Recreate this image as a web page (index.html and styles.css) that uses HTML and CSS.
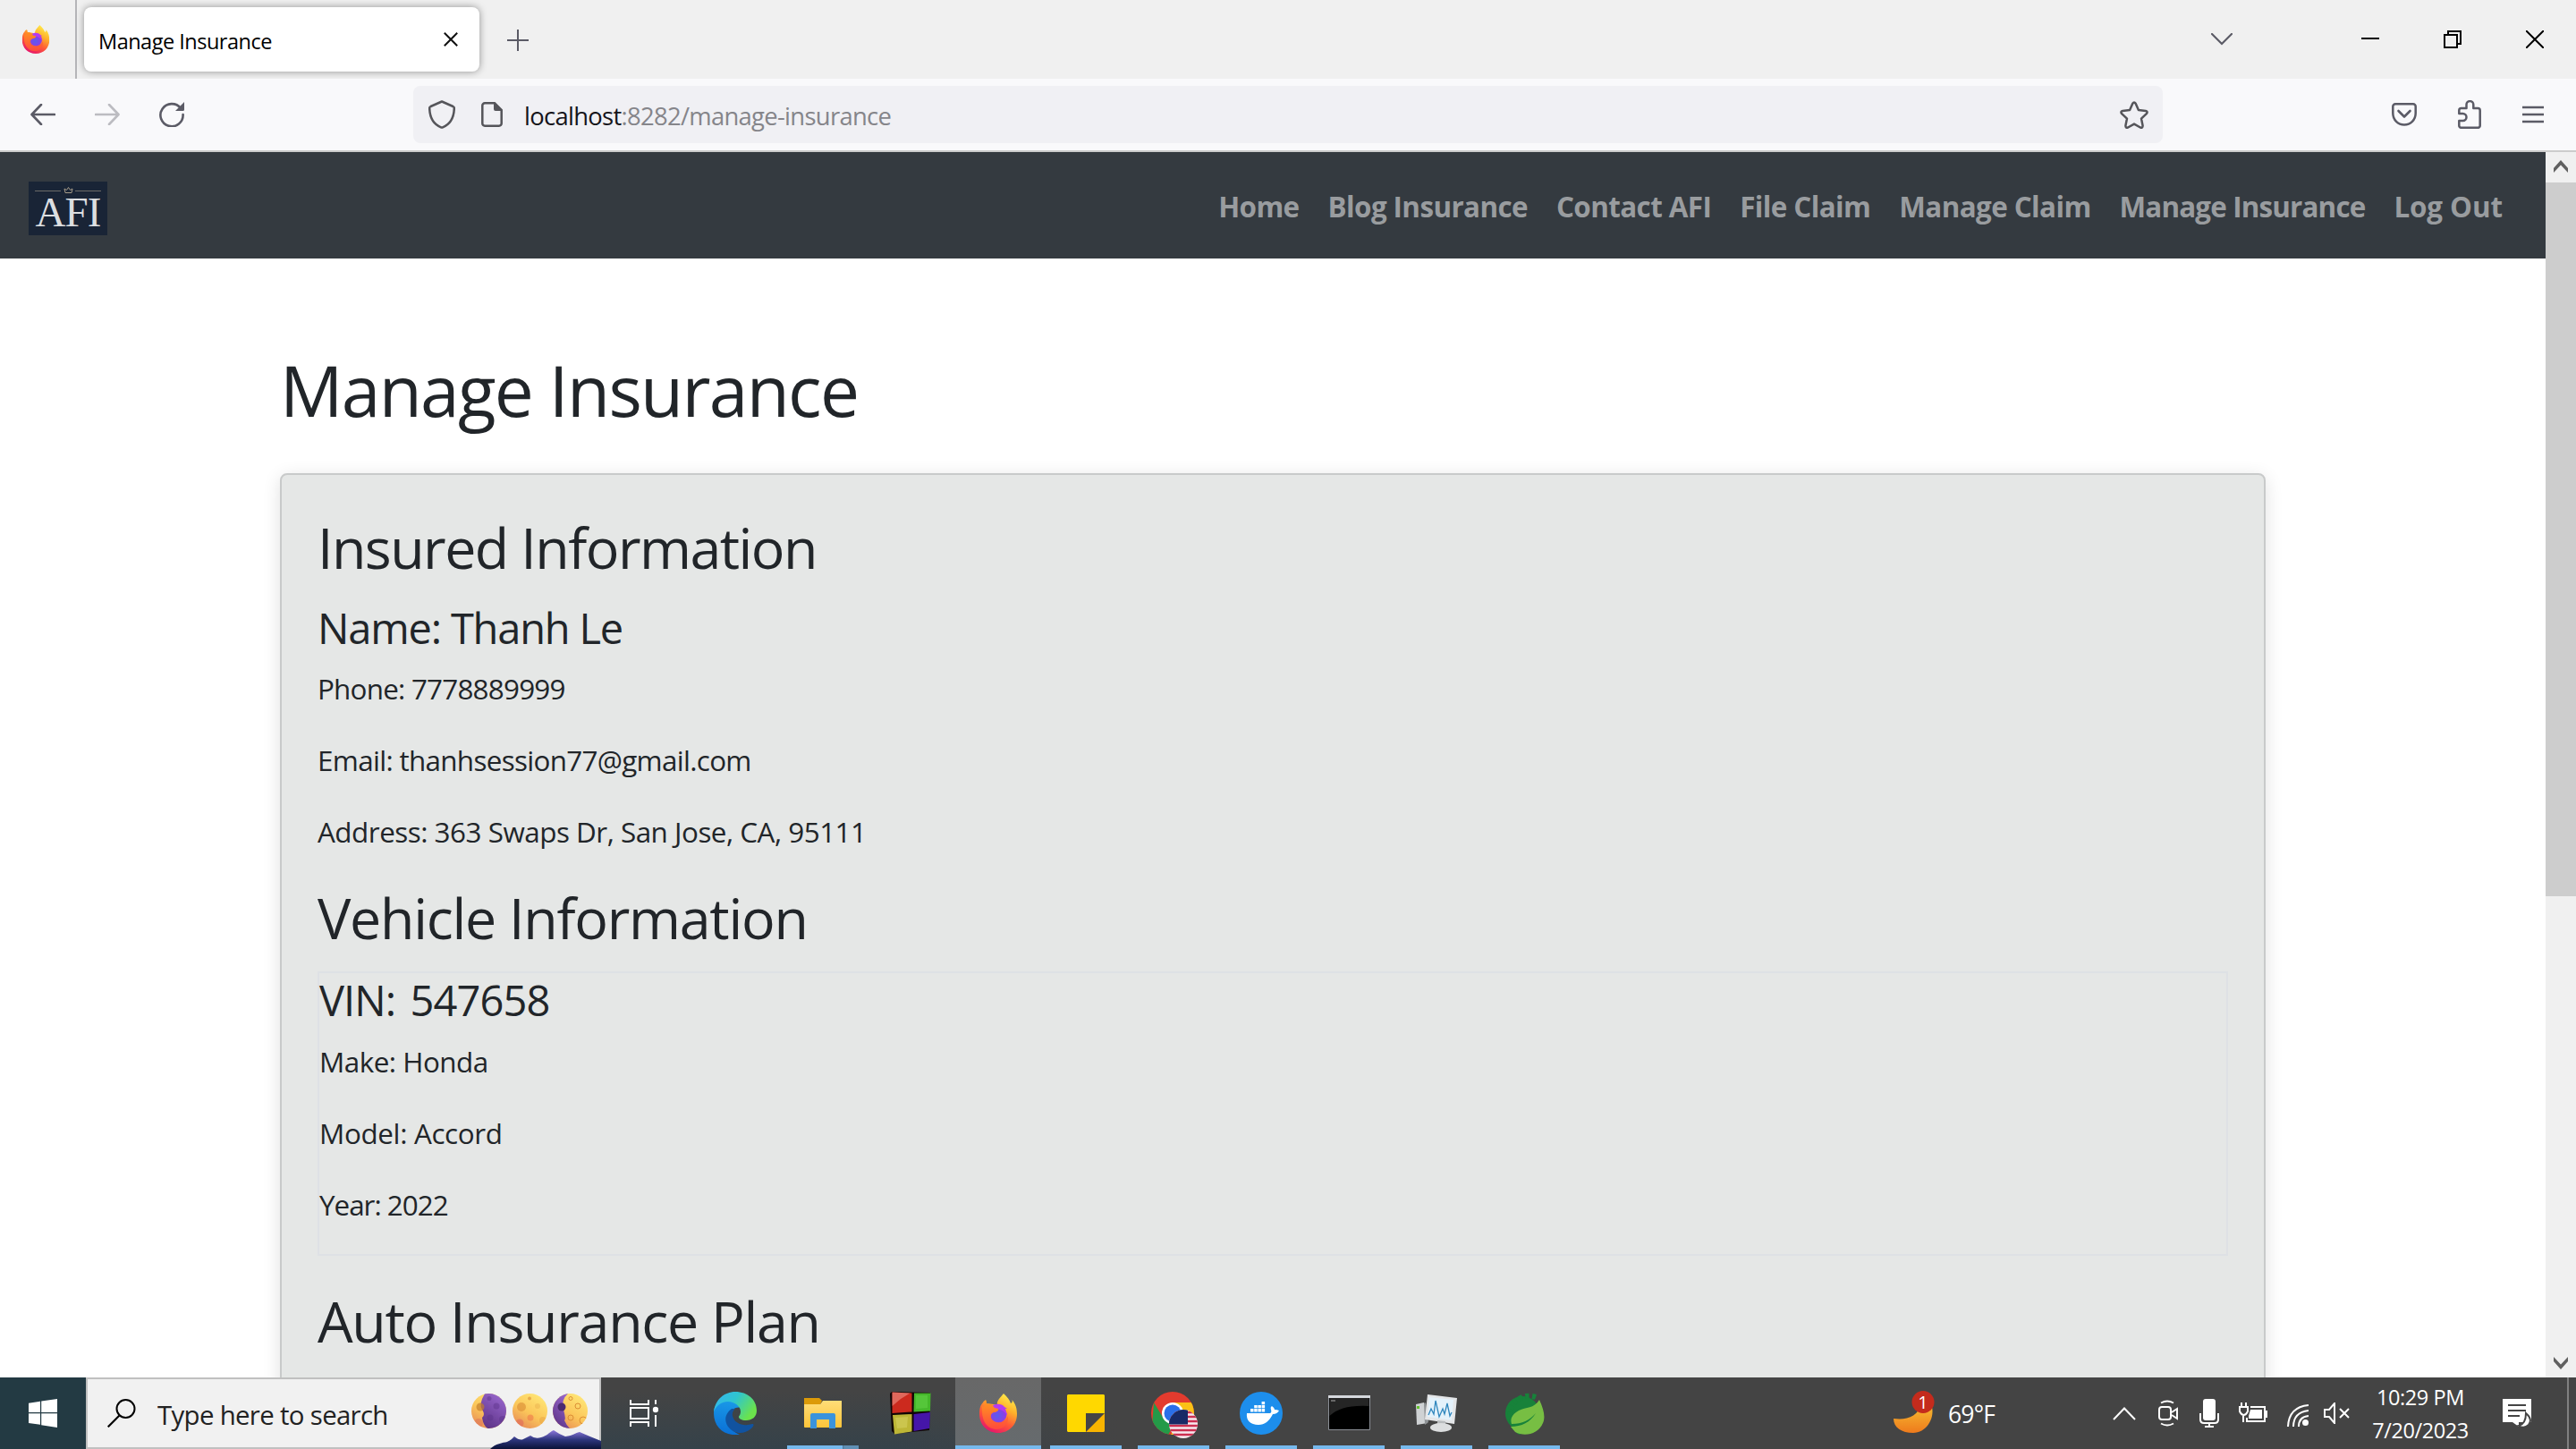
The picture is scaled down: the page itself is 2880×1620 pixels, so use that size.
FILE: index.html
```html
<!DOCTYPE html>
<html lang="en">
<head>
<meta charset="utf-8">
<title>Manage Insurance</title>
<link rel="stylesheet" href="styles.css">
</head>
<body>
<svg class="defs" width="0" height="0" aria-hidden="true">
  <defs>
    <linearGradient id="ffBody" x1=".8" y1="0" x2=".3" y2="1"><stop offset="0" stop-color="#fff44f"/><stop offset=".35" stop-color="#ffb02a"/><stop offset=".65" stop-color="#ff5a36"/><stop offset="1" stop-color="#e5126e"/></linearGradient>
    <linearGradient id="ffFox" x1="0" y1="0" x2="0" y2="1"><stop offset="0" stop-color="#ff9a1f"/><stop offset="1" stop-color="#ff4a3c"/></linearGradient>
    <radialGradient id="ffGlobe" cx=".45" cy=".6" r=".6"><stop offset="0" stop-color="#5a5cf0"/><stop offset="1" stop-color="#9b35e0"/></radialGradient>
    <symbol id="firefox" viewBox="0 0 42 44">
      <path fill="url(#ffBody)" d="M27 0c4 4 7 7 8 11 2-1 2-2 1.500-4C41 12 42 18 42 23c0 12-9 21-21 21S0 35 0 23c0-6 1-10 4-13 0-1 2-2 3-3l1 4c3 0 9 1 12 2-1-5 3-8 7-13z"/>
      <circle cx="21" cy="23" r="9.500" fill="url(#ffGlobe)"/>
      <path fill="#b53af0" d="M14 14c4-3 11-3 14 1l3 2-4 .5c3 2 4 5 4 7-3-5-6-7-12-7z"/>
      <path fill="url(#ffFox)" d="M8 7v5c3-1 7 0 9 4l4 1c1 2-2 4-5 4-2 1-3 2-3 3-1 4 2 7 6 8 7 2 11-2 13-7 1 9-5 15-13 15C8 39 2 31 3 14l2 1z"/>
    </symbol>
    <linearGradient id="edgeTop" x1="0" y1="0" x2="1" y2=".5"><stop offset="0" stop-color="#35b4f2"/><stop offset=".5" stop-color="#2fc5cf"/><stop offset="1" stop-color="#6be34c"/></linearGradient>
    <linearGradient id="edgeSide" x1=".5" y1="0" x2=".4" y2="1"><stop offset="0" stop-color="#1a9be8"/><stop offset="1" stop-color="#0a6fd6"/></linearGradient>
    <linearGradient id="moonGold" x1=".8" y1="0" x2=".2" y2="1"><stop offset="0" stop-color="#ffe878"/><stop offset=".55" stop-color="#fbc65a"/><stop offset="1" stop-color="#e68a58"/></linearGradient>
    <linearGradient id="moonPurple" x1=".8" y1="0" x2=".3" y2="1"><stop offset="0" stop-color="#9a68cf"/><stop offset="1" stop-color="#5e3488"/></linearGradient>
    <linearGradient id="hills" x1="0" y1="0" x2="0" y2="1"><stop offset="0" stop-color="#8d78dc"/><stop offset=".5" stop-color="#2e367e"/><stop offset="1" stop-color="#0a1238"/></linearGradient>
    <linearGradient id="crescent" x1="0" y1="0" x2="0" y2="1"><stop offset="0" stop-color="#f7c033"/><stop offset="1" stop-color="#ee7a1c"/></linearGradient>
    <linearGradient id="folder" x1="0" y1="0" x2="0" y2="1"><stop offset="0" stop-color="#ffdd78"/><stop offset="1" stop-color="#fcc43a"/></linearGradient>
    <clipPath id="moonClip"><circle cx="19.5" cy="19.5" r="19.5"/></clipPath>
    <clipPath id="chromeClip"><circle cx="24" cy="24" r="24"/></clipPath>
    <clipPath id="flagClip"><circle cx="36" cy="36" r="16"/></clipPath>
  </defs>
</svg>

<header class="titlebar">
  <svg class="ff-small" width="32" height="32" viewBox="0 0 42 44"><use href="#firefox"/></svg>
  <span class="tab-separator"></span>
  <div class="tab">
    <span class="tab-title">Manage Insurance</span>
    <svg class="tab-close" width="16" height="16" viewBox="0 0 16 16"><path d="M.8.8l14.4 14.4M15.2.8L.8 15.2" stroke="#111" stroke-width="2" fill="none"/></svg>
  </div>
  <svg class="new-tab" width="24" height="24" viewBox="0 0 24 24"><path d="M12 0v24M0 12h24" stroke="#5b5b66" stroke-width="2" fill="none"/></svg>
  <div class="window-controls">
    <svg width="24" height="14" viewBox="0 0 24 14"><path d="M1 1l11 11L23 1" stroke="#5b5b66" stroke-width="2.2" fill="none" stroke-linecap="round"/></svg>
    <svg class="minimize" width="20" height="20" viewBox="0 0 20 20"><path d="M0 9h20" stroke="#000" stroke-width="2"/></svg>
    <svg class="restore" width="20" height="20" viewBox="0 0 20 20"><path d="M1 5h14v14H1zM5 5V1h14v14h-4" stroke="#000" stroke-width="2" fill="none"/></svg>
    <svg class="close" width="20" height="20" viewBox="0 0 20 20"><path d="M0 0l20 20M20 0L0 20" stroke="#000" stroke-width="2" fill="none"/></svg>
  </div>
</header>

<div class="toolbar">
  <svg class="back" width="28" height="24" viewBox="0 0 28 24"><path d="M12 1L1.5 12 12 23M2 12h25" stroke="#5b5b66" stroke-width="2.6" fill="none" stroke-linecap="round" stroke-linejoin="round"/></svg>
  <svg class="forward" width="28" height="24" viewBox="0 0 28 24"><path d="M16 1l10.500 11L16 23M26 12H1" stroke="#bcbcc1" stroke-width="2.6" fill="none" stroke-linecap="round" stroke-linejoin="round"/></svg>
  <svg class="reload" width="28" height="28" viewBox="0 0 28 28"><path d="M24 7A12.600 12.600 0 1 0 26.600 14" stroke="#5b5b66" stroke-width="2.6" fill="none" stroke-linecap="round"/><path d="M28 0v8.500a1.500 1.500 0 0 1-1.500 1.500H18z" fill="#5b5b66"/></svg>
  <div class="urlbar">
    <svg class="shield" width="30" height="32" viewBox="0 0 30 32"><path d="M15 1.500L27.500 7c1 .5 1.300 1 1.300 2C28.500 20 24 27 16 30.300q-1 .5-2 0C6 27 1.500 20 1.200 9c0-1 .3-1.500 1.300-2z" stroke="#55555a" stroke-width="2.500" fill="none" stroke-linejoin="round"/></svg>
    <svg class="page-icon" width="24" height="28" viewBox="0 0 24 28"><path d="M4 1.300h11L22.700 9v15a2.700 2.700 0 0 1-2.700 2.700H4A2.700 2.700 0 0 1 1.300 24V4A2.700 2.700 0 0 1 4 1.300z" stroke="#55555a" stroke-width="2.500" fill="none"/><path d="M14 1v7a2 2 0 0 0 2 2h7.500z" fill="#55555a"/></svg>
    <span class="url"><span class="url-host">localhost</span>:8282/manage-insurance</span>
    <svg class="star" width="32" height="31" viewBox="0 0 32 31"><path d="M14.300 2.800q1.700-2.600 3.400 0l3.200 7.200 8 .9q2.800.8.900 3.200l-5.800 5.500 1.600 7.900q0 2.900-2.700 2L16 25.600l-6.900 3.900q-2.700.9-2.700-2L8 19.600l-5.800-5.500q-1.900-2.400.9-3.200l8-.9z" stroke="#55555a" stroke-width="2.500" fill="none" stroke-linejoin="round"/></svg>
  </div>
  <svg class="pocket" width="28" height="26" viewBox="0 0 28 26"><path d="M4 1.300h20a2.700 2.700 0 0 1 2.700 2.700v7.500c0 7.500-5.700 13-12.700 13S1.300 19 1.300 11.500V4A2.700 2.700 0 0 1 4 1.300z" stroke="#5b5b66" stroke-width="2.500" fill="none"/><path d="M7.500 9l6.500 6.500L20.500 9" stroke="#5b5b66" stroke-width="2.600" fill="none" stroke-linecap="round" stroke-linejoin="round"/></svg>
  <svg class="puzzle" width="26" height="32" viewBox="0 0 26 32"><path d="M9.500 9V5a3.900 3.900 0 0 1 7.800 0v4h5a2.400 2.400 0 0 1 2.400 2.400v17a2.400 2.400 0 0 1-2.400 2.400H3.700a2.400 2.400 0 0 1-2.400-2.400V23h4.200a4 4 0 0 0 0-8H1.300v-3.600A2.400 2.400 0 0 1 3.700 9z" stroke="#5b5b66" stroke-width="2.500" fill="none" stroke-linejoin="round"/></svg>
  <svg class="menu" width="24" height="20" viewBox="0 0 24 20"><path d="M0 2h24M0 10h24M0 18h24" stroke="#5b5b66" stroke-width="2.400"/></svg>
</div>

<div class="viewport">
  <div class="page">
    <nav class="navbar">
      <svg class="logo" width="88" height="60" viewBox="0 0 88 60"><rect width="88" height="60" fill="#192436"/><path d="M7 10.500h29M52 10.500h29" stroke="#6c6b68" stroke-width="1.200"/><path d="M41 12.500h7l1-4.500-2.500 1.500-2-3-2 3L40 8z" stroke="#a59a88" stroke-width="1" fill="none"/><text x="7.500" y="50" textLength="74" lengthAdjust="spacing" class="logo-text">AFI</text></svg>
      <div class="nav-links">
        <a>Home</a><a>Blog Insurance</a><a>Contact AFI</a><a>File Claim</a><a>Manage Claim</a><a class="nav-long">Manage Insurance</a><a class="nav-short">Log Out</a>
      </div>
    </nav>
    <main class="container">
      <h1>Manage Insurance</h1>
      <section class="card">
        <h2 class="insured-title">Insured Information</h2>
        <h4>Name: Thanh Le</h4>
        <p class="phone">Phone: 7778889999</p>
        <p class="email">Email: thanhsession77@gmail.com</p>
        <p>Address: 363 Swaps Dr, San Jose, CA, 95111</p>
        <h2>Vehicle Information</h2>
        <div class="vehicle">
          <h4 class="vin">VIN: 547658</h4>
          <p>Make: Honda</p>
          <p class="model">Model: Accord</p>
          <p class="year">Year: 2022</p>
        </div>
        <h2>Auto Insurance Plan</h2>
      </section>
    </main>
  </div>
  <aside class="scrollbar">
    <svg class="scroll-arrow" width="34" height="34" viewBox="0 0 34 34"><path d="M9 18l8-9 8 9v5l-8-8.500L9 23z" fill="#606060"/></svg>
    <div class="scroll-thumb"></div>
    <svg class="scroll-arrow down" width="34" height="34" viewBox="0 0 34 34"><path d="M9 11l8 8.500 8-8.500v5l-8 9-8-9z" fill="#606060"/></svg>
  </aside>
</div>

<footer class="taskbar">
  <div class="start"><svg width="32" height="32" viewBox="0 0 32 32"><path fill="#fff" d="M0 4.700L13 2.700V15H0zM14.200 2.500L32 0v15H14.200zM0 16.200h13v12.600L0 27zM14.200 16.200H32V32l-17.800-2.700z"/></svg></div>
  <div class="search">
    <svg class="magnifier" width="32" height="32" viewBox="0 0 32 32"><circle cx="20.500" cy="11" r="10" fill="none" stroke="#000" stroke-width="2"/><path d="M13.500 18.500L.7 31.300" stroke="#000" stroke-width="2.200"/></svg>
    <span class="search-text">Type here to search</span>
    <svg class="search-art" width="146" height="80" viewBox="0 0 146 80">
      <g transform="translate(1 18)" clip-path="url(#moonClip)"><rect width="39" height="39" fill="url(#moonGold)"/><path d="M15 0Q8 12 12 18T12 27q1 8 6 12h21V0z" fill="url(#moonPurple)"/><circle cx="10" cy="15" r="4.500" fill="#c47f2c" opacity=".7"/><g fill="#5b3289" opacity=".45"><circle cx="20" cy="5.500" r="2.500"/><circle cx="28" cy="14" r="3.500"/><circle cx="21" cy="27" r="3.500"/><circle cx="35" cy="29" r="4"/></g><circle cx="8" cy="33" r="5" fill="#e07a5a" opacity=".6"/></g>
      <g transform="translate(47 18)" clip-path="url(#moonClip)"><rect width="39" height="39" fill="url(#moonGold)"/><g fill="#d98b35" opacity=".6"><circle cx="10" cy="15" r="5"/><circle cx="19" cy="5.500" r="2"/><circle cx="28" cy="14" r="3" opacity=".4"/><circle cx="20" cy="27" r="3.500" fill="#ee7a4a"/><circle cx="8" cy="33" r="4.500" fill="#e06a5a"/><circle cx="34" cy="30" r="4" opacity=".5"/></g></g>
      <g transform="translate(92 18)" clip-path="url(#moonClip)"><rect width="39" height="39" fill="url(#moonGold)"/><path d="M17 0Q9 7 12 18t1 12q2 5 6 9H0V0z" fill="url(#moonPurple)"/><circle cx="10" cy="15" r="4.500" fill="#4b2b70"/><g fill="none" stroke="#db8e35" stroke-width="1"><circle cx="20" cy="5.500" r="2"/><circle cx="28" cy="14" r="3"/><circle cx="20" cy="27" r="3"/><circle cx="34" cy="30" r="4"/></g></g>
      <path fill="url(#hills)" d="M22 80c6-6 14-7 19-8 4-2 5-3 8-6q6 5 10 3l8-4q5 4 12 2c7-2 8-5 14-8q7 5 13 7c9-1 11-4 16-5q9 4 24 10v9z"/>
    </svg>
  </div>
  <div class="taskview"><svg width="32" height="30" viewBox="0 0 32 30"><path d="M1 0v5h20V0M1 9h20v12H1zM1 30v-5h20v5M29 0v5M29 17v13" stroke="#fff" stroke-width="2" fill="none"/><circle cx="29" cy="11" r="3.200" fill="#fff"/></svg></div>
  <div class="apps">
    <div class="app"><svg width="48" height="48" viewBox="0 0 48 48"><path fill="url(#edgeSide)" d="M0 24C0 12 9 8 17 8c9 0 14 6 14 10-6-2-14 2-15 12-1 8 5 15 13 18C12 50 0 40 0 24z"/><path fill="#1153a0" d="M20 19c-7 5-9 13-4 20 6 8 17 10 26 2 2-2 4-5 1-5-9 3-20 0-22-9-.6-3 .5-6 3-8z"/><path fill="url(#edgeTop)" d="M0 23C1 9 12 0 24 0c14 0 24 9 24 21 0 7-5 11-12 11-5 0-8-2-8-4 0-1 2-2 2-6 0-6-7-11-14-11C8 11 2 16 0 23z"/></svg></div>
    <div class="app"><svg width="42" height="36" viewBox="0 0 42 36"><path fill="#dc9a08" d="M0 1h17l3 3-2 4H0z"/><path fill="url(#folder)" d="M0 8h18l3-4h21v29a1 1 0 0 1-1 1H1a1 1 0 0 1-1-1z"/><path fill="#3a93dc" d="M7 35V20a2 2 0 0 1 2-2h24a2 2 0 0 1 2 2v15h-7V25H14v10z"/></svg><span class="bar half"></span></div>
    <div class="app"><svg width="46" height="48" viewBox="0 0 46 48"><path fill="#100505" d="M0 2L2 0l43 1-1 42-39 4-3-3z"/><path fill="#cc2a1e" d="M2.500.5L24.500 1.500V22.500L2.500 24z"/><path fill="#ee9a90" d="M2.500.5l20 1L12 8 2.500 16z" opacity=".55"/><path fill="#45b82b" d="M27 1.500h18.500L45 21.500 26.500 22.500z"/><path fill="#6fdc52" d="M29 4h13v14l-13 1z" opacity=".4"/><path fill="#bdb636" d="M3 26l21.500-1v19.500L5 47.500z"/><path fill="#d9d465" d="M6 29l14-1-1 12-11 1z" opacity=".5"/><path fill="#4516a8" d="M26.500 25L45 23l-1 18-17.500 3z"/></svg></div>
    <div class="app active"><svg width="42" height="44" viewBox="0 0 42 44"><use href="#firefox"/></svg><span class="bar"></span></div>
    <div class="app"><svg width="42" height="42" viewBox="0 0 42 42"><path fill="#ffd800" d="M1 0h40l1 1v20H21v21H1l-1-1V1z"/><path fill="#454545" d="M21 21h21L21 42z"/><path fill="#f8b400" d="M42 21v20l-1 1H21z"/></svg><span class="bar"></span></div>
    <div class="app"><svg class="chrome" width="52" height="52" viewBox="0 0 52 52"><g clip-path="url(#chromeClip)"><rect width="48" height="48" fill="#e33b2e"/><path fill="#fbc116" d="M24 12h24v36H22l12-19z"/><path fill="#249a48" d="M3 12l11 18 12 6-8 14H0z"/></g><circle cx="24" cy="24" r="12" fill="#fff"/><circle cx="24" cy="24" r="9.500" fill="#2a6fe8"/><g clip-path="url(#flagClip)"><rect x="20" y="20" width="32" height="32" fill="#f6e9ee"/><path d="M20 23h32M20 28h32M20 33h32M20 38h32M20 43h32M20 48h32" stroke="#cc2f50" stroke-width="2.500"/><path fill="#182a66" d="M20 20h21v16.500H20z"/></g></svg><span class="bar"></span></div>
    <div class="app"><svg width="48" height="48" viewBox="0 0 48 48"><circle cx="24" cy="24" r="24" fill="#1d8eec"/><path fill="#fff" d="M8 24h26q2-1 1-4-1-3 1-4 3 2 3 4 3 0 5 1-2 4-7 4c-4 8-9 12-16 12-9 0-14-5-13-13zM12 19h3.500v3.500H12zM16.200 19h3.500v3.500h-3.500zM20.400 19h3.500v3.500h-3.500zM24.600 19h3.500v3.500h-3.500zM16.200 15h3.500v3.300h-3.500zM20.400 15h3.500v3.300h-3.500zM24.600 15h3.500v3.300h-3.500zM24.600 11h3.500v3.300h-3.500z"/></svg><span class="bar"></span></div>
    <div class="app"><svg width="47" height="40" viewBox="0 0 47 40"><path fill="#000" stroke="#8b8f96" d="M.5.5h46v38H.5z"/><path d="M0 1.500h47" stroke="#d5d8dd" stroke-width="3"/><path fill="#252525" d="M1.500 3h44v9Q15 10 1.500 23z"/><path d="M3 6h5" stroke="#aaa"/></svg><span class="bar"></span></div>
    <div class="app"><svg width="46" height="42" viewBox="0 0 46 42"><path fill="#cfd2d4" d="M0 11l9-2 4 23-12 2z"/><path fill="#8f9396" d="M9 10l2-1 3 22-4 3z"/><path fill="#62c02c" d="M1 13h3v3H1z"/><path fill="#e4e6e8" d="M13 0l33 4-3 29-33-5z"/><path fill="#e4f2fb" d="M15 3l27 3-2 23-27-4z"/><path d="M14 23l3-7 3 6 2-15 4 18 4-9 2 6 3-12 3 14 2-4" fill="none" stroke="#2f86bd" stroke-width="1.300"/><path fill="#b8bbbd" d="M24 29l9 1v7h-9z"/><ellipse cx="28" cy="37" rx="12" ry="5" fill="#dcdedf"/></svg><span class="bar"></span></div>
    <div class="app"><svg width="48" height="48" viewBox="0 0 48 48"><circle cx="22" cy="24" r="19" fill="#17823a"/><path d="M37 6A21 21 0 1 0 22 46" fill="none" stroke="#17823a" stroke-width="6" stroke-dasharray="4.200 3.400"/><path fill="#77be43" d="M41 9c5 11 7 19 4 26-5 12-20 16-31 10l-5-6c12 0 22-5 28-15-7 8-15 12-27 12-2-6 1-11 8-15 8-4 17-2 23-12z"/></svg><span class="bar"></span></div>
  </div>
  <div class="weather">
    <svg width="48" height="50" viewBox="0 0 48 50"><path fill="url(#crescent)" d="M0 31c14 2 28-2 31-17l12 4c3 14-7 29-21 29C9 47 0 41 0 31z"/><circle cx="33" cy="12.500" r="12.500" fill="#c42b1c"/><text x="33" y="20" text-anchor="middle" class="badge-text">1</text></svg>
    <span class="temp">69°F</span>
  </div>
  <div class="tray">
    <svg width="26" height="15" viewBox="0 0 26 15"><path d="M1 14L13 1.500 25 14" fill="none" stroke="#fff" stroke-width="2"/></svg>
    <svg class="meet" width="22" height="30" viewBox="0 0 22 30"><path d="M3 3.500Q10-.5 17 3.500M3 26.500q7 4 14 0" fill="none" stroke="#fff" stroke-width="2"/><rect x="1" y="8" width="13" height="14" rx="3" fill="none" stroke="#fff" stroke-width="2"/><path d="M15 14l6-4v11l-6-4" fill="none" stroke="#fff" stroke-width="2"/></svg>
    <svg class="mic" width="22" height="32" viewBox="0 0 22 32"><rect x="4" width="14" height="24" rx="3" fill="#fff"/><path d="M1 16v7q0 4 4 4h12q4 0 4-4v-7M11 27v4M6 31h10" fill="none" stroke="#fff" stroke-width="2"/></svg>
    <svg class="battery" width="32" height="24" viewBox="0 0 32 24"><path d="M3 0v5M8 0v5M1 5h9v5q-2 4-4.500 4T1 10zM5 14v8M13 5h16v16H9v-4M31 9v8" fill="none" stroke="#fff" stroke-width="2"/><path fill="#fff" d="M13 8h13v10H11v-3z"/></svg>
    <svg class="wifi" width="24" height="25" viewBox="0 0 24 25"><path d="M1 25Q2 3 24 1M7 25Q7 9 24 7M13 25q0-11 11-12" fill="none" stroke="#fff" stroke-width="2"/><circle cx="20.500" cy="20.500" r="3.500" fill="#fff"/></svg>
    <svg class="speaker" width="29" height="24" viewBox="0 0 29 24"><path d="M1 8h5l6-7v22l-6-7H1zM18 7l10 10M28 7L18 17" fill="none" stroke="#fff" stroke-width="2"/></svg>
    <div class="clock"><span>10:29 PM</span><span class="date">7/20/2023</span></div>
    <svg class="notify" width="32" height="32" viewBox="0 0 32 32"><path fill="#fff" d="M0 0h32v26H18v5l-7-5H0z"/><path d="M6 7h20M6 13h20M6 19h13" stroke="#444" stroke-width="2"/><path d="M26 16q8 7 3 13-5 5-11 1 8-2 8-14z" fill="#fff" stroke="#444" stroke-width="2"/></svg>
    <span class="show-desktop"></span>
  </div>
</footer>
</body>
</html>
```

FILE: styles.css
```css
* { box-sizing: border-box; }

body {
  margin: 0;
  width: 2880px;
  height: 1620px;
  overflow: hidden;
  display: flex;
  flex-direction: column;
  background: #fff;
  color: #212529;
  font-family: "Open Sans", "Noto Sans", sans-serif;
}

svg { display: block; flex: none; }
.defs { position: absolute; }

/* Browser title bar */
.titlebar {
  height: 88px;
  flex: none;
  display: flex;
  align-items: center;
  background: #f0f0f0;
}
.ff-small { margin-left: 24px; }
.tab-separator { width: 2px; height: 88px; margin-left: 28px; background: #b5b5b8; }
.tab {
  width: 442px;
  height: 72px;
  margin-left: 8px;
  padding: 0 24px 0 16px;
  display: flex;
  align-items: center;
  justify-content: space-between;
  border-radius: 8px;
  background: #fff;
  box-shadow: 0 0 8px rgba(0, 0, 0, .4);
}
.tab-title { font-size: 23.5px; line-height: 32px; padding-top: 3px; color: #000; letter-spacing: -.5px; }
.new-tab { margin: 2px 0 0 31px; }
.window-controls { margin: 0 36px 0 auto; display: flex; align-items: center; }
.minimize { margin-left: 144px; }
.restore { margin-left: 72px; }
.close { margin-left: 72px; }

/* Browser toolbar */
.toolbar {
  height: 82px;
  flex: none;
  display: flex;
  align-items: center;
  background: #f9f9fb;
  border-bottom: 2px solid #ccc;
}
.back { margin-left: 34px; }
.forward { margin-left: 44px; }
.reload { margin-left: 44px; }
.urlbar {
  width: 1956px;
  height: 64px;
  margin-left: 256px;
  padding: 0 16px 0 17px;
  display: flex;
  align-items: center;
  border-radius: 8px;
  background: #f0f0f4;
}
.page-icon { margin-left: 29px; }
.url { margin-left: 24px; padding-top: 3px; font-size: 27.4px; letter-spacing: -.69px; color: #85858a; }
.url-host { color: #15141a; }
.star { margin-left: auto; }
.pocket { margin-left: 256px; }
.puzzle { margin-left: 46px; }
.menu { margin-left: 46px; }

/* Page viewport */
.viewport { height: 1370px; flex: none; display: flex; }
.page { width: 2846px; overflow: hidden; }
.navbar {
  height: 119px;
  padding: 0 48px 0 32px;
  display: flex;
  align-items: center;
  justify-content: space-between;
  background: #343a40;
}
.logo { margin-top: 7px; }
.logo-text { font: 47px "Liberation Serif", serif; fill: #dcdee0; }
.nav-links {
  display: flex;
  gap: 32px;
  padding-top: 2px;
  font-size: 31.4px;
  line-height: 46px;
  font-weight: 700;
  letter-spacing: -.6px;
  color: #999c9f;
  white-space: nowrap;
}
.nav-long { letter-spacing: -.85px; }
.nav-short { letter-spacing: -.1px; }

.container { width: 2220px; margin: 0 auto; padding-top: 96px; }
h1, h2, h4, p { margin: 0; font-weight: 400; white-space: nowrap; }
h1 { padding-top: 5px; line-height: 91px; font-size: 78.4px; letter-spacing: -1.69px; }
h2 { margin-bottom: 24px; padding-top: 5px; line-height: 71.8px; font-size: 62.7px; letter-spacing: -1.27px; }
h4 { margin-bottom: 16px; padding-top: 4px; line-height: 53.6px; font-size: 47px; letter-spacing: -1.18px; }
p { margin-bottom: 32px; padding-top: 2px; line-height: 46px; font-size: 31.4px; letter-spacing: -.49px; }
.insured-title { letter-spacing: -1.55px; }
.phone { letter-spacing: -.77px; }
.email { letter-spacing: -.68px; }
.vin { letter-spacing: -.9px; word-spacing: 5px; }
.model { letter-spacing: -.34px; }
.year { letter-spacing: -1px; }
.card {
  height: 1400px;
  margin-top: 48px;
  padding: 40px;
  border: 2px solid #c8caca;
  border-radius: 8px;
  background: #e5e7e6;
  box-shadow: 0 4px 20px rgba(0, 0, 0, .12);
}
.vehicle { margin-bottom: 32px; border: 2px solid #dee1e5; }

/* Scrollbar */
.scrollbar { width: 34px; display: flex; flex-direction: column; background: #f0f0f0; }
.scroll-thumb { height: 798px; background: #cdcdcd; }
.down { margin-top: auto; }

/* Taskbar */
.taskbar {
  height: 80px;
  flex: none;
  display: flex;
  color: #fff;
  background: linear-gradient(90deg, rgba(68, 68, 68, 0) 1000px, #444 1250px), linear-gradient(#444 20%, #35424a);
}
.start { width: 96px; display: flex; align-items: center; justify-content: center; background: #233a43; }
.search {
  width: 576px;
  height: 80px;
  padding-left: 22px;
  display: flex;
  align-items: center;
  border: 2px solid #c0c0c0;
  background: #f1f1f1;
}
.search-text { margin-left: 24px; font-size: 29.4px; padding-top: 4px; color: #222; letter-spacing: -.67px; white-space: nowrap; }
.search-art { margin-left: auto; margin-right: -2px; }
.taskview { width: 101px; padding-left: 32px; display: flex; align-items: center; }
.apps { display: flex; }
.app { width: 98px; display: flex; align-items: center; justify-content: center; position: relative; }
.active { background: linear-gradient(#686868, #666b6e) center / 96px 80px no-repeat; }
.chrome { margin: 4px 0 0 2px; }
.bar { position: absolute; left: 9px; bottom: 0; width: 80px; height: 4px; background: #76b9ed; }
.half { background: linear-gradient(90deg, #76b9ed 62px, #4d7594 62px, #6090b5 64px); }
.active .bar { left: 1px; width: 96px; }
.weather { margin-left: 364px; display: flex; align-items: center; }
.badge-text { font: 20px "Open Sans", sans-serif; fill: #fff; }
.temp { margin-left: 13px; padding-top: 2px; font-size: 26.5px; letter-spacing: -.8px; }
.tray { margin-left: auto; display: flex; align-items: center; }
.meet { margin-left: 25px; }
.mic { margin-left: 24px; }
.battery { margin-left: 22px; }
.wifi { margin: 4px 0 0 22px; }
.speaker { margin-left: 17px; }
.clock {
  width: 120px;
  margin-left: 19px;
  padding-top: 2px;
  display: flex;
  flex-direction: column;
  align-items: center;
  font-size: 23.5px;
  line-height: 37px;
  letter-spacing: -.4px;
  white-space: nowrap;
}
.notify { margin-left: 32px; }
.show-desktop { width: 10px; height: 80px; margin-left: 40px; border-left: 2px solid #808080; }
```
